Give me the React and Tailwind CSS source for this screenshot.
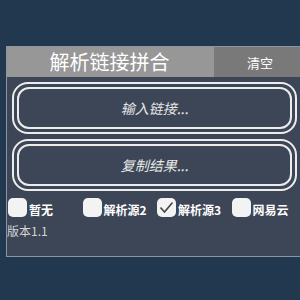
export default function App() {
  const font = { fontFamily: '"Noto Sans CJK SC", "Noto Sans", sans-serif' };
  const items = [
    { label: "暂无", checked: false },
    { label: "解析源2", checked: false },
    { label: "解析源3", checked: true },
    { label: "网易云", checked: false },
  ];
  return (
    <div className="w-[300px] h-[300px] bg-[#22384f] overflow-hidden pt-[46px] pl-[6px]" style={font}>
      <div className="w-[300px] h-[211px] bg-[#3d4657] border-l border-t border-b border-[#8c96a3] flex flex-col">
        <div className="flex h-[30px] shrink-0">
          <div className="flex-1 bg-[#979797] flex items-center justify-center text-white text-[20px] leading-none pr-[2px]">
            解析链接拼合
          </div>
          <div className="w-[92px] bg-[#797979] flex items-center justify-start pl-[33px] text-white text-[13px] leading-none">
            清空
          </div>
        </div>
        <div className="flex flex-col pl-[5px] pt-[5px] gap-[5px] w-[290px]">
          {["输入链接...", "复制结果..."].map((t) => (
            <div key={t} className="h-[52px] w-[285px] border-2 border-[#ececec] rounded-[16px] p-[3px]">
              <div className="h-full border-2 border-[#ececec] rounded-[12px] flex items-center justify-center text-[#e6e6e6] text-[14px] italic">
                {t}
              </div>
            </div>
          ))}
        </div>
        <div className="flex mt-[7px] pl-[1px]">
          {items.map((it) => (
            <div key={it.label} className="w-[75px] flex items-center gap-[2px]">
              <div className="w-[19px] h-[19px] bg-[#f3f3f3] rounded-[5px] flex items-center justify-center">
                {it.checked && (
                  <svg width="15" height="13" viewBox="0 0 15 13">
                    <path d="M1.5 6.5 L5.5 11 L13.5 1.5" fill="none" stroke="#444" strokeWidth="1.6" />
                  </svg>
                )}
              </div>
              <span className="text-[12px] font-bold text-white leading-none mt-[4px]">{it.label}</span>
            </div>
          ))}
        </div>
        <div className="text-[12px] text-[#d4d4d4] leading-none mt-[8px]">版本1.1</div>
      </div>
    </div>
  );
}
